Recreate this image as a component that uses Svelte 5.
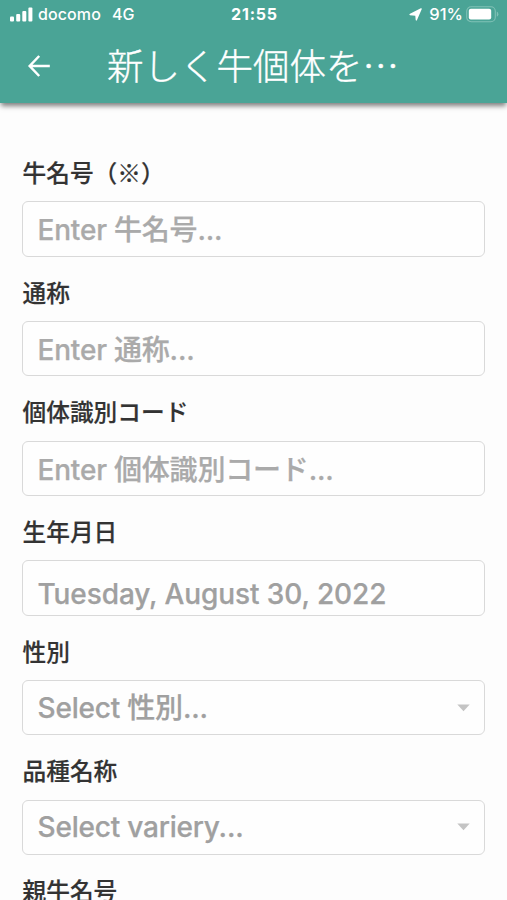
<script>
    let title = "新しく牛個体を…";

    let fields = [
        { label: "牛名号（※）", text: "Enter 牛名号...", type: "text" },
        { label: "通称", text: "Enter 通称...", type: "text" },
        { label: "個体識別コード", text: "Enter 個体識別コード...", type: "text" },
        { label: "生年月日", text: "Tuesday, August 30, 2022", type: "date" },
        { label: "性別", text: "Select 性別...", type: "select" },
        { label: "品種名称", text: "Select variery...", type: "select" }
    ];

    let nextLabel = "親牛名号";
</script>

<div class="screen">
    <header class="header">
        <!-- Phone status bar -->
        <div class="status">
            <div class="status-left">
                <svg class="signal" width="23" height="15" viewBox="0 0 23 15" fill="#fff">
                    <rect x="0" y="9.5" width="4" height="5" rx="1" />
                    <rect x="6.2" y="7" width="4" height="7.5" rx="1" />
                    <rect x="12.3" y="4" width="4" height="10.5" rx="1" />
                    <rect x="18.4" y="0.5" width="4" height="14" rx="1" />
                </svg>
                <span class="carrier">docomo</span>
                <span class="network">4G</span>
            </div>
            <span class="time">21:55</span>
            <div class="status-right">
                <svg width="13" height="13" viewBox="0 0 13 13" fill="#fff">
                    <path d="M12.8 1 L8 12 Q7.2 13.4 6.7 12 L6.3 7.7 L1 7.2 Q-0.4 6.6 1 5.7 L11.8 0.2 Q13 0 12.8 1Z" />
                </svg>
                <span class="percent">91%</span>
                <svg width="33" height="17" viewBox="0 0 33 17">
                    <rect x="0.7" y="0.7" width="28.6" height="15" rx="4.5" fill="none" stroke="#80c1b6" stroke-width="1.1" />
                    <rect x="2.8" y="2.8" width="22.4" height="10.8" rx="2" fill="#fff" />
                    <path d="M30.8 5.6 Q32.4 6.4 32.4 8.2 Q32.4 10 30.8 10.8Z" fill="#80c1b6" />
                </svg>
            </div>
        </div>

        <!-- Navigation bar -->
        <div class="nav">
            <button class="back" aria-label="Back">
                <svg width="24" height="22" viewBox="0 0 24 22" fill="none" stroke="#fff" stroke-width="2.5">
                    <path d="M22.8 11 H3 M12.2 1 L2.7 11 L12.2 21" />
                </svg>
            </button>
            <h1 class="title">{title}</h1>
        </div>
    </header>

    <main class="form">
        {#each fields as field}
            <div class="field">
                <div class="label">{field.label}</div>
                <div class="input {field.type}">
                    <span class="value">{field.text}</span>
                    {#if field.type === "select"}
                        <svg width="13" height="8" viewBox="0 0 13 8" fill="#c4c4c4">
                            <path d="M0.3 0.5 H12.7 L6.5 7.2Z" />
                        </svg>
                    {/if}
                </div>
            </div>
        {/each}
        <div class="label">{nextLabel}</div>
    </main>
</div>

<style>
    :global(body) {
        overflow: hidden;
    }

    .screen {
        height: 900px;
        overflow: hidden;
        background-color: #fdfdfd;
        font-family: Inter, "Noto Sans CJK JP", sans-serif;
    }

    .header {
        position: relative;
        height: 103px;
        background-color: #4aa496;
        color: #fff;
        box-shadow: 0 4px 5px -1px rgba(0, 0, 0, 0.5);
    }

    /* Status bar */
    .status {
        display: grid;
        grid-template-columns: 1fr auto 1fr;
        align-items: center;
        height: 29px;
        padding: 0 8px 0 10px;
        font-size: 16px;
        line-height: 29px;
    }

    .status-left,
    .status-right {
        display: flex;
        align-items: center;
    }

    .status-right {
        justify-content: flex-end;
    }

    .carrier {
        margin-left: 5px;
        font-weight: 500;
        letter-spacing: 0.1px;
    }

    .network {
        margin-left: 11px;
        font-weight: 500;
    }

    .time {
        font-weight: 700;
        letter-spacing: 0.8px;
    }

    .percent {
        margin: 0 3px 0 7px;
        font-weight: 500;
        font-size: 16.5px;
    }

    /* Navigation bar */
    .nav {
        display: flex;
        align-items: center;
        height: 74px;
    }

    .back {
        display: flex;
        margin: 0 0 0 26.5px;
        padding: 0;
        border: none;
        background: none;
    }

    .title {
        margin: 0 0 0 56.5px;
        font-family: "Noto Sans CJK JP", sans-serif;
        font-size: 36.5px;
        font-weight: 300;
        line-height: 72px;
        height: 74px;
        white-space: nowrap;
        -webkit-text-stroke: 0.35px #fff;
    }

    /* Form */
    .form {
        padding: 42px 22px 0;
    }

    .field {
        height: 119.7px;
    }

    .label {
        height: 56.2px;
        padding-left: 0.5px;
        line-height: 55px;
        font-family: "Noto Sans CJK JP", sans-serif;
        font-size: 23.7px;
        font-weight: 500;
        color: #333;
        white-space: nowrap;
        -webkit-text-stroke: 0.2px #333;
    }

    .input {
        display: flex;
        align-items: center;
        justify-content: space-between;
        box-sizing: border-box;
        height: 55.5px;
        padding: 0 14.5px;
        border: 1px solid #d9d9d9;
        border-radius: 6px;
        background-color: #fefefe;
        color: #aaa;
        font-size: 28px;
        font-weight: 500;
        letter-spacing: -0.2px;
        white-space: nowrap;
    }

    .value {
        line-height: 52px;
        padding-top: 3px;
        -webkit-text-stroke: 0.25px currentColor;
    }

    .date,
    .select {
        color: #a0a0a0;
    }

    .select .value {
        padding-top: 0;
    }

    .date {
        letter-spacing: -0.1px;
    }

    .date .value {
        padding-top: 12px;
    }
</style>
